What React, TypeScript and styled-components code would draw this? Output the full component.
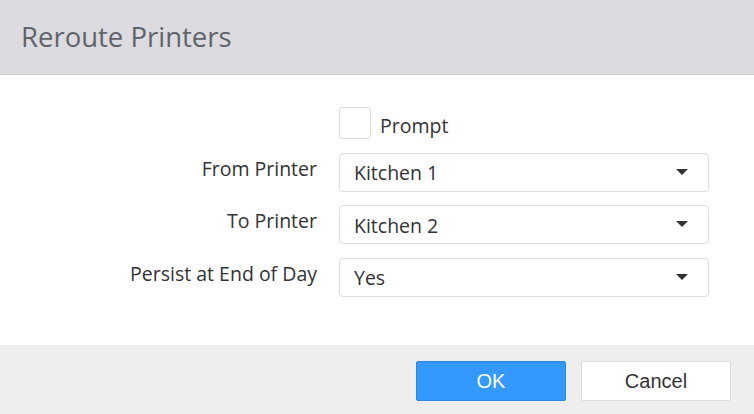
import React from "react";
import styled, { createGlobalStyle } from "styled-components";

const Global = createGlobalStyle`
  html, body { margin: 0; padding: 0; background: #fff; }
  body { font-family: "Open Sans", "Noto Sans", sans-serif; }
  * { box-sizing: border-box; }
`;

const Dialog = styled.div`
  width: 754px;
  height: 414px;
  display: flex;
  flex-direction: column;
  background: #fff;
`;

const Header = styled.div`
  height: 75px;
  background: #dcdbe0;
  display: flex;
  align-items: center;
  padding: 0 0 1px 21px;
  border-bottom: 1px solid #d2d2d6;
`;

const Title = styled.h1`
  margin: 0;
  font-family: "Open Sans", sans-serif;
  font-weight: 400;
  font-size: 27.5px;
  line-height: 1;
  color: #5f646b;
`;

const Body = styled.div`
  flex: 1;
  padding-top: 32px;
`;

const Form = styled.div`
  display: grid;
  grid-template-columns: 317px 370px;
  column-gap: 22px;
  row-gap: 13.5px;
  align-items: start;
`;

const Label = styled.label`
  text-align: right;
  font-size: 19.5px;
  line-height: 27px;
  color: #333;
  padding-top: 2px;
`;

const CheckRow = styled.div`
  height: 32px;
  display: flex;
  align-items: flex-start;
  gap: 9px;
`;

const Box = styled.span`
  width: 32px;
  height: 32px;
  border: 1px solid #dcdcdc;
  border-radius: 3px;
  background: #fff;
`;

const CheckText = styled.span`
  font-size: 19.5px;
  line-height: 26px;
  color: #333;
  padding-top: 6px;
`;

const Select = styled.div`
  height: 39px;
  border: 1px solid #dedede;
  border-radius: 4px;
  display: flex;
  align-items: center;
  justify-content: space-between;
  padding: 1px 20px 0 14px;
  font-size: 19.5px;
  line-height: 27px;
  color: #333;
`;

const Caret = styled.span`
  width: 0;
  height: 0;
  border-left: 6px solid transparent;
  border-right: 6px solid transparent;
  border-top: 6px solid #333;
  margin-bottom: 2px;
`;

const Footer = styled.div`
  height: 69px;
  background: #eeeeee;
  display: flex;
  justify-content: flex-end;
  align-items: flex-start;
  gap: 15px;
  padding: 16px 23px 0 0;
`;

const Button = styled.button<{ $primary?: boolean }>`
  width: 150px;
  height: 40px;
  border-radius: 2px;
  font-family: "Liberation Sans", Arial, sans-serif;
  font-size: 20px;
  cursor: pointer;
  background: ${(p) => (p.$primary ? "#3399ff" : "#ffffff")};
  color: ${(p) => (p.$primary ? "#ffffff" : "#333333")};
  border: 1px solid ${(p) => (p.$primary ? "#2a86e0" : "#dddddd")};
`;

const rows = [
  { label: "From Printer", value: "Kitchen 1" },
  { label: "To Printer", value: "Kitchen 2" },
  { label: "Persist at End of Day", value: "Yes" },
];

export default function App() {
  return (
    <>
      <Global />
      <Dialog>
        <Header>
          <Title>Reroute Printers</Title>
        </Header>
        <Body>
          <Form>
            <span />
            <CheckRow>
              <Box />
              <CheckText>Prompt</CheckText>
            </CheckRow>
            {rows.map((r) => (
              <React.Fragment key={r.label}>
                <Label>{r.label}</Label>
                <Select>
                  <span>{r.value}</span>
                  <Caret />
                </Select>
              </React.Fragment>
            ))}
          </Form>
        </Body>
        <Footer>
          <Button $primary>OK</Button>
          <Button>Cancel</Button>
        </Footer>
      </Dialog>
    </>
  );
}
